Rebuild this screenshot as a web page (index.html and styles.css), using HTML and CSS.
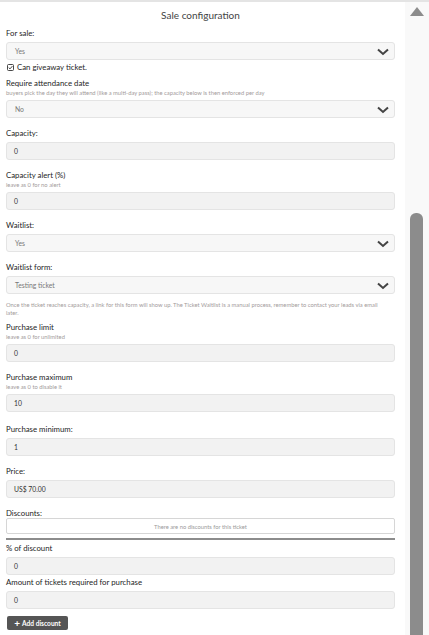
FILE: index.html
```html
<!DOCTYPE html>
<html lang="en">
<head>
    <meta charset="UTF-8">
    <meta name="viewport" content="width=device-width, initial-scale=1.0">
    <title>Sale configuration</title>
    <link rel="stylesheet" href="styles.css">
</head>
<body>
    <div class="panel">
        <div class="content">
            <h2 class="title">Sale configuration</h2>

            <div class="field">
                <label class="label">For sale:</label>
                <div class="select">Yes<svg class="chev" width="12" height="8" viewBox="0 0 12 8"><polyline points="1,1.5 6,6 11,1.5" fill="none" stroke="#444" stroke-width="2"/></svg></div>
                <div class="check">
                    <svg width="7" height="7" viewBox="0 0 7 7"><rect x="0.5" y="0.5" width="6" height="6" rx="1" fill="none" stroke="#333" stroke-width="0.9"/><path d="M1.7 3.6 L3 4.9 L5.4 2.1" fill="none" stroke="#333" stroke-width="0.9"/></svg>
                    Can giveaway ticket.
                </div>
            </div>

            <div class="field">
                <label class="label with-help">Require attendance date</label>
                <div class="help">buyers pick the day they will attend (like a multi-day pass); the capacity below is then enforced per day</div>
                <div class="select">No<svg class="chev" width="12" height="8" viewBox="0 0 12 8"><polyline points="1,1.5 6,6 11,1.5" fill="none" stroke="#444" stroke-width="2"/></svg></div>
            </div>

            <div class="field">
                <label class="label">Capacity:</label>
                <div class="input">0</div>
            </div>

            <div class="field">
                <label class="label with-help">Capacity alert (%)</label>
                <div class="help">leave as 0 for no alert</div>
                <div class="input">0</div>
            </div>

            <div class="field">
                <label class="label">Waitlist:</label>
                <div class="select">Yes<svg class="chev" width="12" height="8" viewBox="0 0 12 8"><polyline points="1,1.5 6,6 11,1.5" fill="none" stroke="#444" stroke-width="2"/></svg></div>
            </div>

            <div class="field note-field">
                <label class="label">Waitlist form:</label>
                <div class="select">Testing ticket<svg class="chev" width="12" height="8" viewBox="0 0 12 8"><polyline points="1,1.5 6,6 11,1.5" fill="none" stroke="#444" stroke-width="2"/></svg></div>
                <div class="help note">Once the ticket reaches capacity, a link for this form will show up. The Ticket Waitlist is a manual process, remember to contact your leads via email later.</div>
            </div>

            <div class="field">
                <label class="label with-help">Purchase limit</label>
                <div class="help">leave as 0 for unlimited</div>
                <div class="input">0</div>
            </div>

            <div class="field wide">
                <label class="label with-help">Purchase maximum</label>
                <div class="help">leave as 0 to disable it</div>
                <div class="input">10</div>
            </div>

            <div class="field">
                <label class="label">Purchase minimum:</label>
                <div class="input">1</div>
            </div>

            <div class="field">
                <label class="label">Price:</label>
                <div class="input">US$ 70.00</div>
            </div>

            <div class="field discounts">
                <label class="label tight">Discounts:</label>
                <div class="empty">There are no discounts for this ticket</div>
                <div class="rule"></div>
            </div>

            <div class="field small">
                <label class="label">% of discount</label>
                <div class="input">0</div>
            </div>

            <div class="field small">
                <label class="label">Amount of tickets required for purchase</label>
                <div class="input">0</div>
            </div>

            <button class="add-btn"><span class="plus">+</span> Add discount</button>
        </div>

        <div class="scrollbar">
            <div class="arrow"></div>
            <div class="thumb"></div>
        </div>
    </div>
</body>
</html>
```

FILE: styles.css
```css
* {
    box-sizing: border-box;
    margin: 0;
    padding: 0;
}

body {
    font-family: 'Lato', 'Liberation Sans', sans-serif;
    background: #ffffff;
    color: #333;
    width: 429px;
    height: 635px;
    overflow: hidden;
}

.panel {
    display: flex;
    height: 635px;
    border-top: 2px solid #e4e4e4;
}

.content {
    width: 405px;
    padding: 6px 10px 0 6px;
}

.title {
    font-size: 10px;
    font-weight: normal;
    color: #444;
    text-align: center;
    line-height: 14px;
    margin-bottom: 6px;
}

.field {
    margin-bottom: 10px;
}

.field.wide {
    margin-bottom: 12px;
}

.field.small {
    margin-bottom: 2px;
}

.field.note-field {
    margin-bottom: 5px;
}

.label {
    display: block;
    font-size: 7.8px;
    font-weight: normal;
    color: #1e1e1e;
    line-height: 10px;
    margin-bottom: 4px;
}

.label.with-help {
    margin-bottom: 1px;
}

.help {
    font-size: 5.8px;
    color: #a39b9b;
    line-height: 8px;
    margin-bottom: 3px;
}

.help.note {
    margin-top: 7px;
    margin-bottom: 0;
    padding-right: 4px;
}

.select,
.input {
    height: 18px;
    border: 1px solid #e4e4e4;
    border-radius: 3px;
    font-size: 6.8px;
    display: flex;
    align-items: center;
    position: relative;
}

.select {
    background: #f7f7f7;
    color: #777;
    padding-left: 8px;
}

.input {
    background: #f2f2f2;
    color: #333;
    padding-left: 7px;
}

.chev {
    position: absolute;
    right: 5px;
    top: 5px;
}

.check {
    display: flex;
    align-items: center;
    gap: 3px;
    font-size: 7.8px;
    color: #1e1e1e;
    line-height: 10px;
    margin-top: 2px;
    padding-left: 1px;
    margin-bottom: -4px;
}

.label.tight {
    margin-bottom: 0;
}

.empty {
    height: 16px;
    border: 1px solid #d6d6d6;
    border-radius: 2px;
    font-size: 5.8px;
    color: #9a9a9a;
    display: flex;
    align-items: center;
    justify-content: center;
}

.rule {
    height: 2px;
    background: #8c8c8c;
    margin-top: 4px;
    margin-bottom: -7px;
}

.add-btn {
    font-family: 'Lato', 'Liberation Sans', sans-serif;
    background: #555;
    color: #fff;
    border: none;
    border-radius: 2px;
    font-size: 6.6px;
    font-weight: bold;
    height: 14px;
    width: 61px;
    margin-left: 1px;
    margin-top: 7px;
    display: flex;
    align-items: center;
    justify-content: center;
    gap: 2px;
}

.plus {
    font-size: 10px;
    line-height: 10px;
}

.scrollbar {
    width: 24px;
    background: #f9f9f9;
    padding: 5px 6px 0 5px;
    display: flex;
    flex-direction: column;
    align-items: center;
}

.arrow {
    width: 0;
    height: 0;
    border-left: 7px solid transparent;
    border-right: 7px solid transparent;
    border-bottom: 9px solid #8c8c8c;
}

.thumb {
    width: 13px;
    flex: 1;
    margin-top: 197px;
    background: #8c8c8c;
    border-radius: 6px 6px 0 0;
}
```
